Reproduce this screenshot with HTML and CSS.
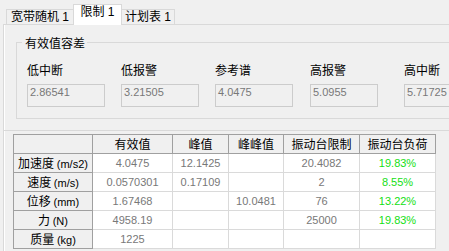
FILE: index.html
```html
<!DOCTYPE html>
<html lang="zh-CN">
<head>
<meta charset="utf-8">
<link rel="stylesheet" href="styles.css">
</head>
<body>
<div class="window">
  <div class="tabs">
    <div class="tab">宽带随机 1</div>
    <div class="tab active">限制 1</div>
    <div class="tab">计划表 1</div>
  </div>
  <div class="page">
    <div class="group">
      <span class="group-title">有效值容差</span>
      <div class="fields">
        <div class="field"><div class="label">低中断</div><div class="box">2.86541</div></div>
        <div class="field"><div class="label">低报警</div><div class="box">3.21505</div></div>
        <div class="field"><div class="label">参考谱</div><div class="box">4.0475</div></div>
        <div class="field"><div class="label">高报警</div><div class="box narrow">5.0955</div></div>
        <div class="field"><div class="label">高中断</div><div class="box">5.71725</div></div>
      </div>
    </div>
    <div class="lower">
      <table class="grid">
        <colgroup>
          <col class="c1"><col class="c2"><col class="c3"><col class="c4"><col class="c5"><col class="c6">
        </colgroup>
        <tr>
          <th></th><th>有效值</th><th>峰值</th><th>峰峰值</th><th>振动台限制</th><th>振动台负荷</th>
        </tr>
        <tr>
          <th class="rh">加速度 <span class="unit">(m/s2)</span></th>
          <td>4.0475</td><td>12.1425</td><td></td><td>20.4082</td><td class="pct">19.83%</td>
        </tr>
        <tr>
          <th class="rh">速度 <span class="unit">(m/s)</span></th>
          <td>0.0570301</td><td>0.17109</td><td></td><td>2</td><td class="pct">8.55%</td>
        </tr>
        <tr>
          <th class="rh">位移 <span class="unit">(mm)</span></th>
          <td>1.67468</td><td></td><td>10.0481</td><td>76</td><td class="pct">13.22%</td>
        </tr>
        <tr>
          <th class="rh">力 <span class="unit">(N)</span></th>
          <td>4958.19</td><td></td><td></td><td>25000</td><td class="pct">19.83%</td>
        </tr>
        <tr>
          <th class="rh">质量 <span class="unit">(kg)</span></th>
          <td>1225</td><td></td><td></td><td></td><td></td>
        </tr>
      </table>
    </div>
  </div>
</div>
</body>
</html>
```
FILE: styles.css
```css
html, body {
  margin: 0;
  padding: 0;
  background: #f0f0f0;
}
.window {
  width: 449px;
  height: 251px;
  overflow: hidden;
  font-family: "Liberation Sans", "Noto Sans CJK SC", sans-serif;
  font-size: 12px;
  color: #000;
}
.tabs {
  display: flex;
  align-items: flex-end;
  height: 24px;
  padding-left: 6px;
}
.tab {
  position: relative;
  box-sizing: border-box;
  height: 15px;
  line-height: 14px;
  border: 1px solid #d9d9d9;
  border-bottom: none;
  text-align: center;
  white-space: nowrap;
  background: #f0f0f0;
}
.tab:first-child { width: 68px; }
.tab:last-child { width: 54px; margin-left: -1px; }
.tab.active {
  z-index: 2;
  width: 49px;
  height: 21px;
  margin-left: -1px;
  margin-bottom: -1px;
  padding-top: 1px;
  line-height: 13px;
  background: #fff;
}
.page {
  height: 227px;
  margin-left: 3px;
  border-left: 1px solid #d9d9d9;
  border-top: 1px solid #d9d9d9;
  box-shadow: inset 1px 0 0 #fff;
}
.group {
  position: relative;
  width: 480px;
  margin: 17px 0 0 12px;
  border: 1px solid #d9d9d9;
  border-right: none;
  padding: 19px 0 11px 10px;
}
.group-title {
  position: absolute;
  top: -8px;
  left: 5px;
  padding: 0 2px 0 3px;
  line-height: 16px;
  background: #f0f0f0;
  font-family: "Noto Sans CJK SC", sans-serif;
}
.fields {
  display: grid;
  grid-template-columns: 94px 94px 95px 94px 94px;
}
.label {
  height: 16px;
  line-height: 16px;
  margin-bottom: 6px;
  font-family: "Noto Sans CJK SC", sans-serif;
}
.box {
  box-sizing: border-box;
  width: 78px;
  height: 23px;
  padding: 1px 2px;
  border: 1px solid #cccccc;
  line-height: 13px;
  font-size: 11px;
  color: #787878;
  white-space: nowrap;
}
.box.narrow { width: 68px; }
.lower {
  margin-top: 11px;
  border-top: 1px solid #d9d9d9;
  padding: 3px 0 0 9px;
}
.grid {
  border-collapse: collapse;
  table-layout: fixed;
  width: 422px;
  background: #fff;
}
.c1 { width: 79px; }
.c2 { width: 80px; }
.c3 { width: 56px; }
.c4 { width: 55px; }
.c5 { width: 76px; }
.c6 { width: 76px; }
.grid th, .grid td {
  height: 18px;
  padding: 0;
  text-align: center;
  vertical-align: middle;
  white-space: nowrap;
  overflow: hidden;
}
.grid th {
  border: 1px solid #a0a0a0;
  background: #f0f0f0;
  font-weight: normal;
  font-family: "Noto Sans CJK SC", sans-serif;
  font-size: 12px;
  line-height: 16px;
}
.grid td {
  border: 1px solid #dadada;
  font-size: 11px;
  color: #787878;
  line-height: 14px;
}
.grid td.pct { color: #14e014; }
.unit {
  font-family: "Liberation Sans", sans-serif;
  font-size: 11px;
}
```
